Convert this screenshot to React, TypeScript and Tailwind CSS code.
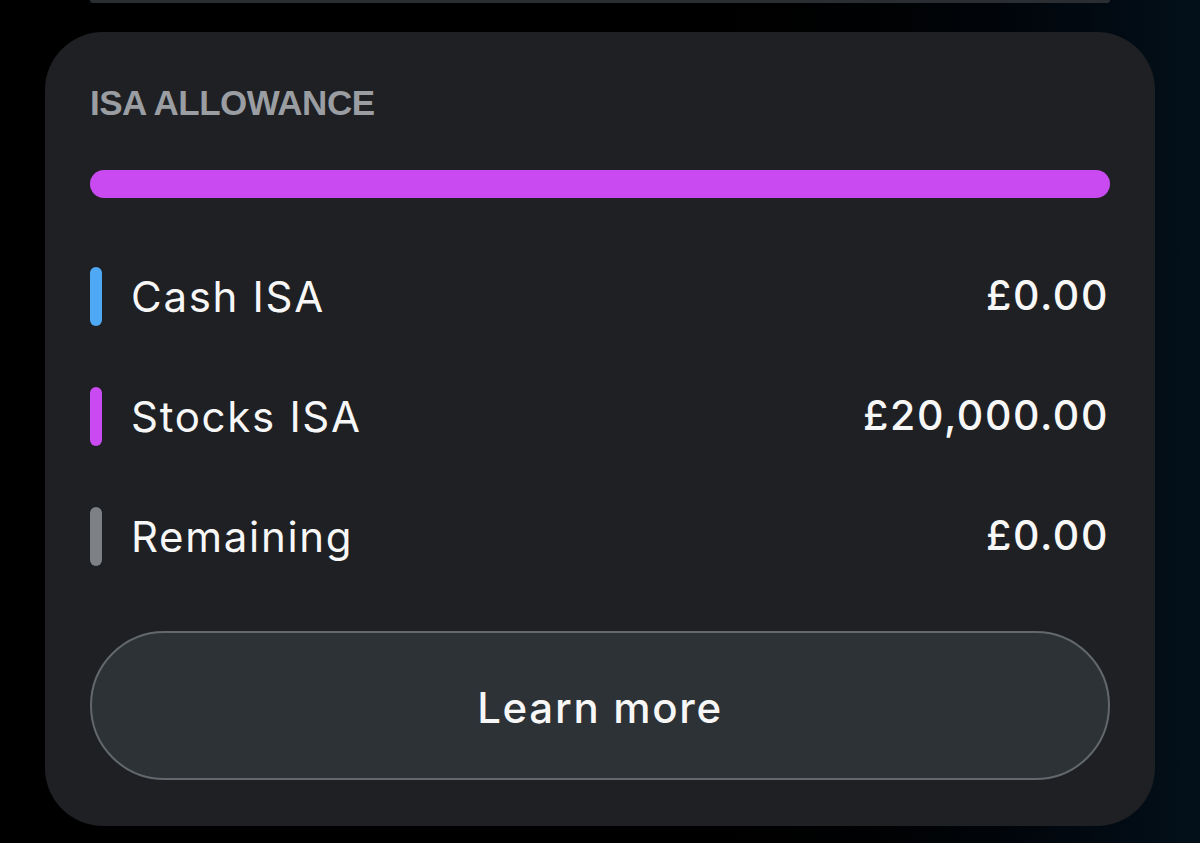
import React from "react";

const rows = [
  { label: "Cash ISA", amount: "£0.00", color: "bg-[#4fa8f4]" },
  { label: "Stocks ISA", amount: "£20,000.00", color: "bg-[#c84af0]" },
  { label: "Remaining", amount: "£0.00", color: "bg-[#7d8084]" },
];

export default function App() {
  return (
    <div
      className="w-[1200px] h-[843px] overflow-hidden bg-gradient-to-r from-black via-[#000000] to-[#03101a] flex flex-col"
      style={{ fontFamily: "Inter, 'Liberation Sans', sans-serif" }}
    >
      <div className="mx-[90px] h-[3px] rounded-b-[6px] bg-[#2a2e32]" />
      <div className="mt-[29px] ml-[45px] w-[1110px] h-[794px] rounded-[58px] bg-[#1e2023] px-[45px] pt-[50px] flex flex-col">
        <div
          className="h-[42px] leading-[42px] text-[35px] font-bold text-[#9a9ea2] tracking-[-0.5px]"
          style={{ fontFamily: "'Liberation Sans', Arial, sans-serif" }}
        >
          ISA ALLOWANCE
        </div>
        <div className="mt-[46px] h-[28px] rounded-full bg-[#c94af0]" />
        <div className="mt-[38px] flex flex-col">
          {rows.map((r) => (
            <div key={r.label} className="h-[120px] flex items-center">
              <div className={`w-[12px] h-[59px] rounded-full ${r.color}`} />
              <div className="ml-[29px] text-[42px] text-[#f7f7f7] tracking-[1.7px]">
                {r.label}
              </div>
              <div className="ml-auto text-[41px] font-medium text-[#f7f7f7] tracking-[1.6px] mr-[1px]">
                {r.amount}
              </div>
            </div>
          ))}
        </div>
        <button className="mt-[35px] h-[149px] w-full rounded-full bg-[#2c3235] border-2 border-[#62686c] flex items-center justify-center pt-[3px] text-[42px] font-medium text-[#f7f7f7] tracking-[1.7px]">
          Learn more
        </button>
      </div>
    </div>
  );
}
